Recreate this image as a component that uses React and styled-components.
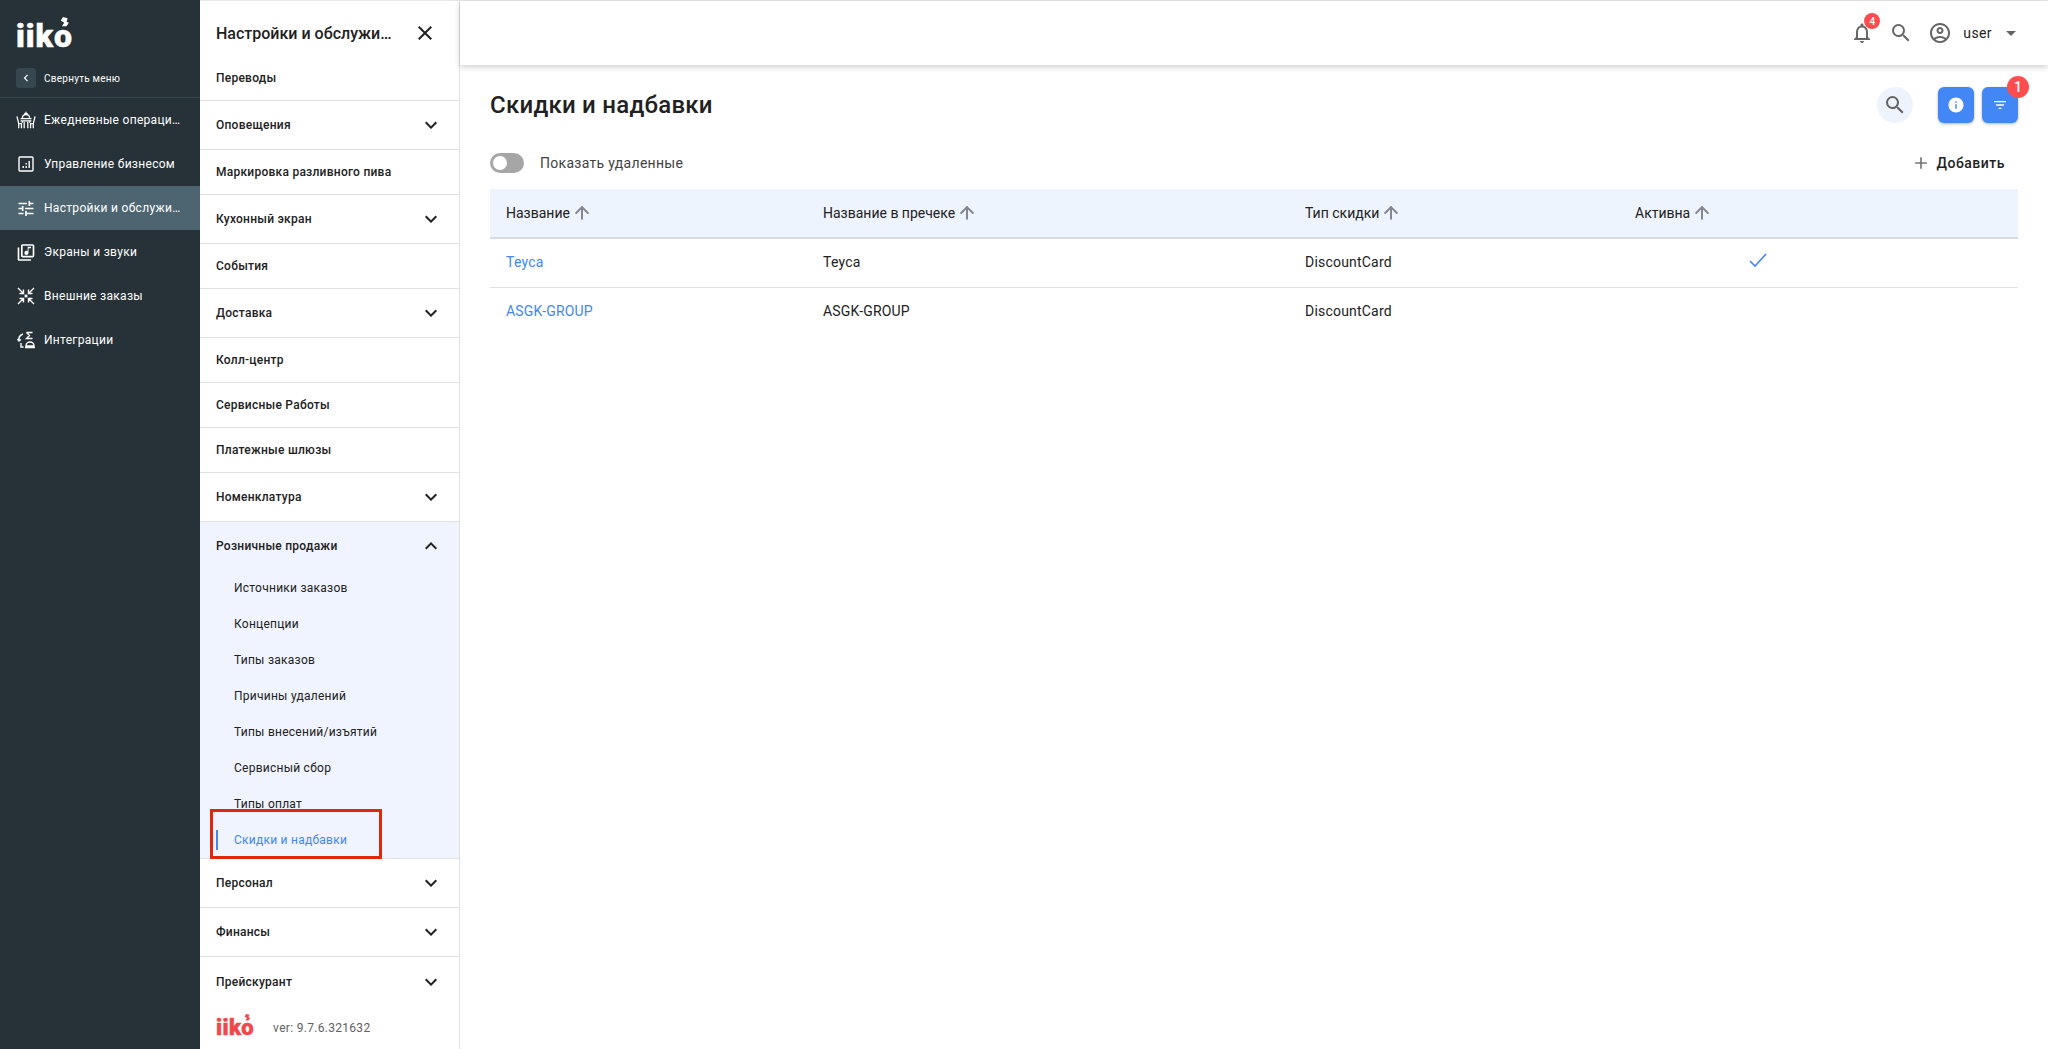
import React from "react";
import styled, { createGlobalStyle } from "styled-components";
import { ArrowUp } from "lucide-react";
import {
  MdAdd,
  MdArrowDropDown,
  MdChevronLeft,
  MdClose,
  MdFilterList,
  MdInfo,
  MdKeyboardArrowDown,
  MdKeyboardArrowUp,
  MdNotificationsNone,
  MdOutlineAccountCircle,
  MdOutlineLibraryMusic,
  MdSearch,
  MdTune,
} from "react-icons/md";

const GlobalStyle = createGlobalStyle`
  html, body {
    margin: 0;
    padding: 0;
    height: 100%;
    overflow: hidden;
    background: #fff;
    font-family: Roboto, "Noto Sans", sans-serif;
    color: #212121;
  }
  * {
    box-sizing: border-box;
  }
`;

const Page = styled.div`
  display: flex;
  width: 2048px;
  height: 1049px;
  overflow: hidden;
`;

const Rail = styled.aside`
  width: 200px;
  flex-shrink: 0;
  background: #263238;
  color: #fff;
`;

const RailHeader = styled.div`
  height: 98px;
  padding: 20px 16px 0;
  border-bottom: 1px solid #37474f;
`;

const LogoWrap = styled.div`
  position: relative;
  display: inline-block;
  font-family: Roboto, sans-serif;
  font-weight: 900;
  font-size: ${(p) => p.$size}px;
  line-height: 1;
  letter-spacing: ${(p) => p.$spacing}px;
  color: ${(p) => p.$color};
  -webkit-text-stroke: 0.5px ${(p) => p.$color};
  svg {
    position: absolute;
    right: 2px;
    top: ${(p) => p.$sparkTop}px;
  }
`;

const Collapse = styled.div`
  display: flex;
  align-items: center;
  gap: 8px;
  margin-top: 16px;
  font-size: 10px;
  letter-spacing: 0.25px;
`;

const CollapseButton = styled.div`
  width: 20px;
  height: 20px;
  display: flex;
  align-items: center;
  justify-content: center;
  background: #37474f;
  border-radius: 3px;
`;

const RailItem = styled.div`
  height: 44px;
  display: flex;
  align-items: center;
  padding-left: 16px;
  gap: 8px;
  background: ${(p) => (p.$active ? "#4d6570" : "transparent")};
  font-size: 12px;
  letter-spacing: 0.3px;
`;

const RailIcon = styled.div`
  width: 20px;
  height: 20px;
  flex-shrink: 0;
  display: flex;
  align-items: center;
  justify-content: center;
`;

const RailLabel = styled.span`
  width: 138px;
  white-space: nowrap;
  overflow: hidden;
  text-overflow: ellipsis;
`;

const SubPanel = styled.nav`
  width: 260px;
  flex-shrink: 0;
  display: flex;
  flex-direction: column;
  border-right: 1px solid #e0e0e0;
  border-top: 1px solid #e8e8e8;
`;

const SubHeader = styled.div`
  height: 55px;
  display: flex;
  align-items: center;
  justify-content: space-between;
  padding: 9px 22px 0 16px;
`;

const SubTitle = styled.div`
  width: 182px;
  font-size: 16px;
  font-weight: 500;
  white-space: nowrap;
  overflow: hidden;
  text-overflow: ellipsis;
`;

const CloseButton = styled.div`
  display: flex;
  color: #212121;
`;

const Row = styled.div`
  height: ${(p) => (p.$tall ? 49 : 45)}px;
  display: flex;
  align-items: center;
  justify-content: space-between;
  padding: 0 16px;
  font-size: 12px;
  font-weight: 500;
  letter-spacing: 0.25px;
  border-bottom: ${(p) => (p.$flat ? "none" : "1px solid #e0e0e0")};
  color: #212121;
`;

const GroupHead = styled(Row)`
  height: 48px;
  border-bottom: none;
`;

const Group = styled.div`
  position: relative;
  background: #f0f4fe;
  border-bottom: 1px solid #e0e0e0;
`;

const SubRow = styled.div`
  position: relative;
  height: 36px;
  display: flex;
  align-items: center;
  padding-left: 34px;
  font-size: 12px;
  letter-spacing: 0.25px;
  color: ${(p) => (p.$active ? "#4287f5" : "#212121")};
`;

const ActiveMark = styled.span`
  position: absolute;
  left: 16px;
  top: 8px;
  width: 2px;
  height: 20px;
  background: #4287f5;
`;

const Highlight = styled.div`
  position: absolute;
  left: 10px;
  right: 77px;
  bottom: -1px;
  height: 50px;
  border: 3px solid #e0260c;
  pointer-events: none;
`;

const SubFooter = styled.div`
  flex: 1;
  display: flex;
  align-items: center;
  gap: 19px;
  padding-left: 16px;
  font-size: 12px;
  letter-spacing: 0.3px;
  color: #616161;
`;

const Main = styled.main`
  flex: 1;
  min-width: 0;
  display: flex;
  flex-direction: column;
  border-top: 1px solid #e8e8e8;
`;

const TopBar = styled.header`
  height: 64px;
  display: flex;
  align-items: center;
  justify-content: flex-end;
  padding-right: 25px;
  box-shadow: 0 2px 6px rgba(0, 0, 0, 0.2);
  color: #666;
`;

const BellWrap = styled.div`
  position: relative;
  display: flex;
  margin-right: 15px;
`;

const TopSearch = styled.div`
  display: flex;
  margin-right: 15px;
`;

const Badge = styled.span`
  position: absolute;
  display: flex;
  align-items: center;
  justify-content: center;
  border-radius: 50%;
  background: #ff4d4f;
  color: #fff;
  font-weight: 500;
  width: ${(p) => p.$size}px;
  height: ${(p) => p.$size}px;
  font-size: ${(p) => p.$font}px;
  top: ${(p) => p.$top}px;
  right: ${(p) => p.$right}px;
`;

const UserName = styled.span`
  margin: 0 7px 0 11px;
  font-size: 14px;
  letter-spacing: 0.4px;
  color: #212121;
`;

const Content = styled.div`
  padding: 0 30px;
`;

const TitleRow = styled.div`
  display: flex;
  align-items: center;
  height: 36px;
  margin-top: 22px;
`;

const Title = styled.h1`
  flex: 1;
  margin: 0;
  font-size: 24px;
  font-weight: 500;
  letter-spacing: 0.25px;
  color: #212121;
`;

const RoundButton = styled.div`
  width: 36px;
  height: 36px;
  display: flex;
  align-items: center;
  justify-content: center;
  border-radius: 50%;
  background: #eef4fd;
  color: #616161;
  margin-right: 25px;
`;

const BlueButton = styled.div`
  position: relative;
  width: 36px;
  height: 36px;
  display: flex;
  align-items: center;
  justify-content: center;
  border-radius: 6px;
  background: #4287f5;
  color: #fff;
  margin-left: ${(p) => (p.$first ? 0 : 8)}px;
  box-shadow: 0 1px 3px rgba(0, 0, 0, 0.3);
`;

const ToggleRow = styled.div`
  display: flex;
  align-items: center;
  height: 40px;
  margin-top: 20px;
  font-size: 14px;
  letter-spacing: 0.3px;
  color: #424242;
`;

const Toggle = styled.div`
  width: 34px;
  height: 20px;
  padding: 3px;
  margin-right: 16px;
  border-radius: 10px;
  background: #a6a6a6;
`;

const Knob = styled.div`
  width: 14px;
  height: 14px;
  border-radius: 50%;
  background: #fff;
`;

const AddButton = styled.div`
  margin-left: auto;
  margin-right: 13px;
  display: flex;
  align-items: center;
  gap: 6px;
  font-weight: 500;
  letter-spacing: 0.5px;
  color: #212121;
  svg {
    color: #757575;
  }
`;

const Table = styled.div`
  margin-top: 6px;
`;

const TableRow = styled.div`
  display: grid;
  grid-template-columns: 317px 482px 330px 278px 1fr;
  align-items: center;
  height: ${(p) => (p.$head ? 50 : 49)}px;
  padding-bottom: ${(p) => (p.$head ? 0 : p.$last ? 3 : 2)}px;
  background: ${(p) => (p.$head ? "#eef4fd" : "transparent")};
  border-bottom: ${(p) =>
    p.$head ? "2px solid #d3dbe8" : p.$last ? "none" : "1px solid #e0e0e0"};
  font-size: 14px;
  letter-spacing: ${(p) => (p.$head ? 0 : 0.2)}px;
  color: #212121;
`;

const Cell = styled.div`
  display: flex;
  align-items: center;
  gap: 2px;
  padding-left: 16px;
  color: ${(p) => (p.$link ? "#4287f5" : "inherit")};
`;

const SortArrow = styled(ArrowUp)`
  color: #85858f;
`;

const CheckCell = styled.div`
  display: flex;
  justify-content: center;
  padding-bottom: 4px;
`;

function Logo({ color, size, spacing, sparkTop }) {
  return (
    <LogoWrap $color={color} $size={size} $spacing={spacing} $sparkTop={sparkTop}>
      iiko
      <svg width={size * 0.45} height={size * 0.4} viewBox="0 0 12 11">
        <path d="M5 0l4 1-1 3 2 1-2 3H4L6 5 3 3z" fill={color} />
      </svg>
    </LogoWrap>
  );
}

const stroke = { fill: "none", stroke: "#fff", strokeWidth: 1.4 };

function DailyIcon() {
  return (
    <svg width="22" height="20" viewBox="0 0 22 20" {...stroke}>
      <path d="M9 3h4M11 1v2M7 8c0-3 2-4 4-4s4 1 4 4M5 8.5h12M5 11h12" />
      <path d="M1 6l2 8v5M3 14h3v5M21 6l-2 8v5M19 14h-3v5M9 12v7M13 12v7M7 13v-2M15 13v-2" />
    </svg>
  );
}

function BusinessIcon() {
  return (
    <svg width="16" height="16" viewBox="0 0 16 16">
      <rect x="1" y="1" width="14" height="14" rx="1" {...stroke} />
      <path d="M4.5 10h1.4v2H4.5zM7.5 7h1.4v1.4H7.5zM7.5 10h1.4v2H7.5zM10.5 5h1.4v7h-1.4z" fill="#fff" />
    </svg>
  );
}

function OrdersIcon() {
  return (
    <svg width="20" height="20" viewBox="0 0 20 20" {...stroke}>
      <path d="M2 2l5.5 5.5M7.5 3.5v4h-4M18 2l-5.5 5.5M12.5 3.5v4h4M2 18l5.5-5.5M7.5 16.500v-4h-4M18 18l-5.500-5.500M12.500 16.500v-4h4" />
      <path d="M9.300 9.300h1.400v1.400H9.300z" fill="#fff" />
    </svg>
  );
}

function IntegrationIcon() {
  return (
    <svg width="20" height="20" viewBox="0 0 20 20" {...stroke}>
      <path d="M7 4C4 5 2.500 7.500 3 10.500M1.500 9l1.500 2 2-1.500M5 13v4h2.500" />
      <path d="M10.500 2.500h6M10.500 2.500l3 3-3 3h6M10 16c0-2.500 2-4 4-4s4 1.500 4 4zM9 17.500h10" />
    </svg>
  );
}

const railItems = [
  { label: "Ежедневные операции и отчеты", icon: <DailyIcon /> },
  { label: "Управление бизнесом", icon: <BusinessIcon /> },
  { label: "Настройки и обслуживание", icon: <MdTune size={21} />, active: true },
  { label: "Экраны и звуки", icon: <MdOutlineLibraryMusic size={21} /> },
  { label: "Внешние заказы", icon: <OrdersIcon /> },
  { label: "Интеграции", icon: <IntegrationIcon /> },
];

const rowsBefore = [
  { label: "Переводы" },
  { label: "Оповещения", tall: true },
  { label: "Маркировка разливного пива" },
  { label: "Кухонный экран", tall: true },
  { label: "События" },
  { label: "Доставка", tall: true },
  { label: "Колл-центр" },
  { label: "Сервисные Работы" },
  { label: "Платежные шлюзы" },
  { label: "Номенклатура", tall: true },
];

const retailItems = [
  "Источники заказов",
  "Концепции",
  "Типы заказов",
  "Причины удалений",
  "Типы внесений/изъятий",
  "Сервисный сбор",
  "Типы оплат",
];

const columns = ["Название", "Название в пречеке", "Тип скидки", "Активна"];

const discounts = [
  { name: "Teyca", type: "DiscountCard", active: true },
  { name: "ASGK-GROUP", type: "DiscountCard", active: false },
];

export default function App() {
  return (
    <Page>
      <GlobalStyle />
      <Rail>
        <RailHeader>
          <Logo color="#fff" size={32} spacing={1} sparkTop={-3} />
          <Collapse>
            <CollapseButton>
              <MdChevronLeft size={14} />
            </CollapseButton>
            Свернуть меню
          </Collapse>
        </RailHeader>
        {railItems.map((item) => (
          <RailItem key={item.label} $active={item.active}>
            <RailIcon>{item.icon}</RailIcon>
            <RailLabel>{item.label}</RailLabel>
          </RailItem>
        ))}
      </Rail>

      <SubPanel>
        <SubHeader>
          <SubTitle>Настройки и обслуживание</SubTitle>
          <CloseButton>
            <MdClose size={24} />
          </CloseButton>
        </SubHeader>
        {rowsBefore.map((row) => (
          <Row key={row.label} $tall={row.tall}>
            {row.label}
            {row.tall && <MdKeyboardArrowDown size={24} />}
          </Row>
        ))}
        <Group>
          <GroupHead>
            Розничные продажи
            <MdKeyboardArrowUp size={24} />
          </GroupHead>
          {retailItems.map((item) => (
            <SubRow key={item}>{item}</SubRow>
          ))}
          <SubRow $active>
            <ActiveMark />
            Скидки и надбавки
          </SubRow>
          <Highlight />
        </Group>
        <Row $tall>
          Персонал
          <MdKeyboardArrowDown size={24} />
        </Row>
        <Row $tall>
          Финансы
          <MdKeyboardArrowDown size={24} />
        </Row>
        <Row $tall $flat>
          Прейскурант
          <MdKeyboardArrowDown size={24} />
        </Row>
        <SubFooter>
          <Logo color="#f0474a" size={22} spacing={0.4} sparkTop={-3} />
          ver: 9.7.6.321632
        </SubFooter>
      </SubPanel>

      <Main>
        <TopBar>
          <BellWrap>
            <MdNotificationsNone size={24} />
            <Badge $size={16} $font={10} $top={-8} $right={-6}>
              4
            </Badge>
          </BellWrap>
          <TopSearch>
            <MdSearch size={24} />
          </TopSearch>
          <MdOutlineAccountCircle size={24} />
          <UserName>user</UserName>
          <MdArrowDropDown size={24} />
        </TopBar>
        <Content>
          <TitleRow>
            <Title>Скидки и надбавки</Title>
            <RoundButton>
              <MdSearch size={24} />
            </RoundButton>
            <BlueButton $first>
              <MdInfo size={18} />
            </BlueButton>
            <BlueButton>
              <MdFilterList size={16} />
              <Badge $size={22} $font={14} $top={-11} $right={-11}>
                1
              </Badge>
            </BlueButton>
          </TitleRow>
          <ToggleRow>
            <Toggle>
              <Knob />
            </Toggle>
            Показать удаленные
            <AddButton>
              <MdAdd size={20} />
              Добавить
            </AddButton>
          </ToggleRow>
          <Table>
            <TableRow $head>
              {columns.map((col) => (
                <Cell key={col}>
                  {col}
                  <SortArrow size={20} strokeWidth={2.4} />
                </Cell>
              ))}
            </TableRow>
            {discounts.map((d, i) => (
              <TableRow key={d.name} $last={i === discounts.length - 1}>
                <Cell $link>{d.name}</Cell>
                <Cell>{d.name}</Cell>
                <Cell>{d.type}</Cell>
                <CheckCell>
                  {d.active && (
                    <svg width="18" height="15" viewBox="0 0 18 15" fill="none" stroke="#4287f5" strokeWidth="1.6">
                      <path d="M1 8l5 5L17 1" />
                    </svg>
                  )}
                </CheckCell>
              </TableRow>
            ))}
          </Table>
        </Content>
      </Main>
    </Page>
  );
}
